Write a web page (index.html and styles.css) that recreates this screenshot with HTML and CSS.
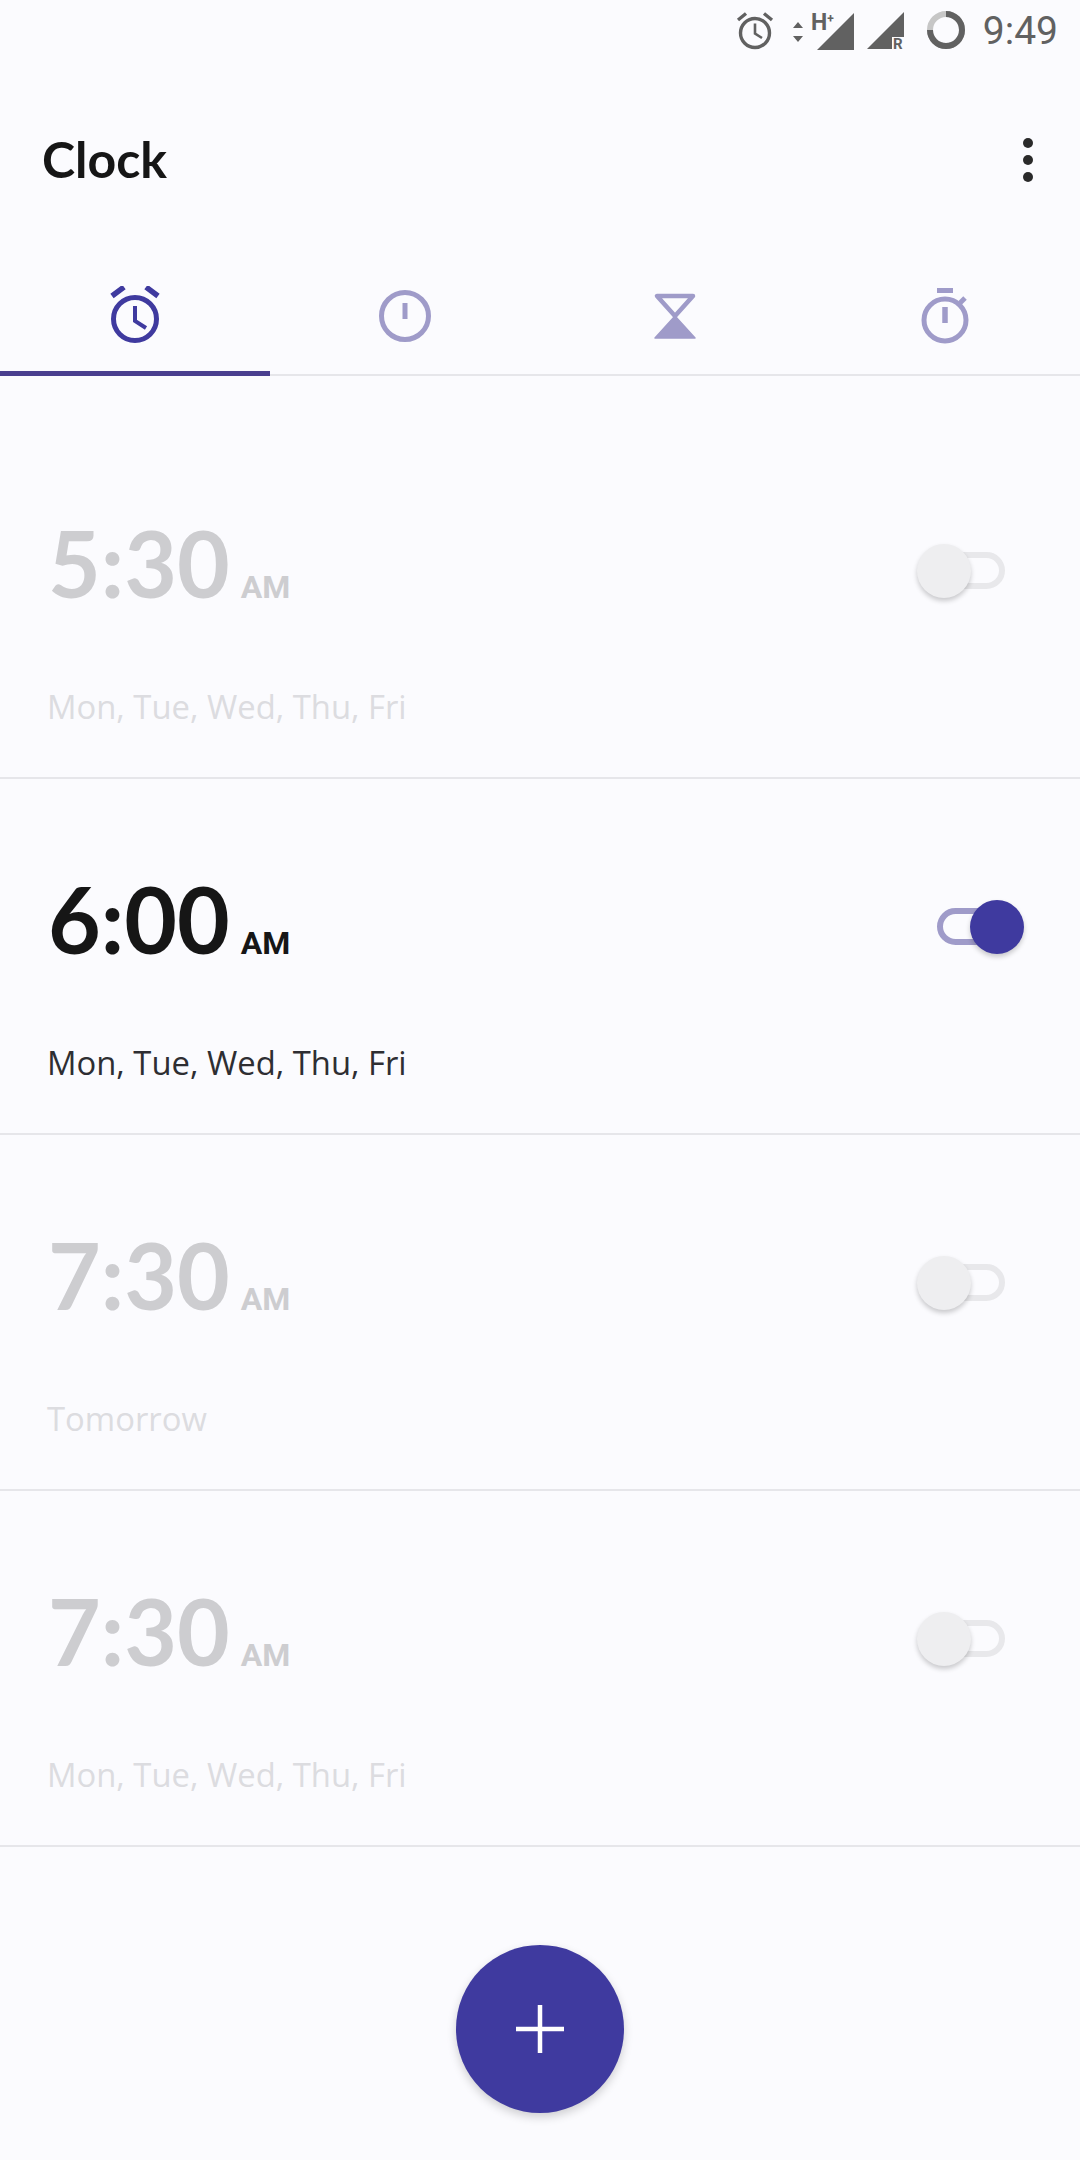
FILE: index.html
```html
<!DOCTYPE html>
<html lang="en">
<head>
    <meta charset="UTF-8">
    <meta name="viewport" content="width=device-width, initial-scale=1.0">
    <title>Clock</title>
    <link rel="stylesheet" href="styles.css">
</head>
<body>
    <div class="app">
        <div class="status-bar">
            <svg class="st-alarm" width="38" height="38" viewBox="0 0 38 38">
                <circle cx="19" cy="21" r="14.5" fill="none" stroke="#616161" stroke-width="3.4"/>
                <path d="M2 8 10 1.5M36 8 28 1.5" stroke="#616161" stroke-width="3.4" fill="none"/>
                <path d="M19 11.5V21.5L26 26" stroke="#616161" stroke-width="2.6" fill="none"/>
            </svg>
            <svg class="st-arrows" width="12" height="22" viewBox="0 0 12 22">
                <path d="M6 0 11 6H1ZM6 20 1 14H11Z" fill="#616161"/>
            </svg>
            <svg class="st-signal" width="44" height="40" viewBox="0 0 44 40">
                <path d="M43 1V38H6Z" fill="#616161"/>
                <text x="0" y="18" class="st-label">H<tspan class="st-plus" dy="-7">+</tspan></text>
            </svg>
            <svg class="st-signal-r" width="40" height="40" viewBox="0 0 40 40">
                <path d="M37 0V37H0Z" fill="#616161"/>
                <rect x="25" y="25" width="15" height="15" fill="#fbfbfe"/>
                <text x="26" y="37" class="st-label-r">R</text>
            </svg>
            <svg class="st-battery" width="40" height="40" viewBox="0 0 40 40">
                <circle cx="20" cy="20" r="16" fill="none" stroke="#c6c6c6" stroke-width="6"/>
                <path d="M20 4A16 16 0 1 1 4 20" fill="none" stroke="#616161" stroke-width="6"/>
            </svg>
            <span class="status-time">9:49</span>
        </div>

        <header class="toolbar">
            <h1>Clock</h1>
            <div class="kebab"><span></span><span></span><span></span></div>
        </header>

        <nav class="tabs">
            <div class="tab active">
                <svg width="60" height="60" viewBox="0 0 60 60">
                    <circle cx="30" cy="33" r="21.5" fill="none" stroke="currentColor" stroke-width="5"/>
                    <path d="M7 10 19 1M53 10 41 1" fill="none" stroke="currentColor" stroke-width="5.5"/>
                    <path d="M30 20V35L41 42" fill="none" stroke="currentColor" stroke-width="4"/>
                </svg>
            </div>
            <div class="tab">
                <svg width="60" height="60" viewBox="0 0 60 60">
                    <circle cx="30" cy="30" r="23.5" fill="none" stroke="currentColor" stroke-width="5"/>
                    <path d="M30 17V33" fill="none" stroke="currentColor" stroke-width="5"/>
                </svg>
            </div>
            <div class="tab">
                <svg width="60" height="60" viewBox="0 0 60 60">
                    <path d="M12 10H48L30 30Z" fill="none" stroke="currentColor" stroke-width="4.5" stroke-linejoin="round"/>
                    <path d="M30 30 50 52H10Z" fill="currentColor" stroke="currentColor" stroke-width="1.5" stroke-linejoin="round"/>
                </svg>
            </div>
            <div class="tab">
                <svg width="60" height="60" viewBox="0 0 60 60">
                    <circle cx="30" cy="34" r="21" fill="none" stroke="currentColor" stroke-width="5"/>
                    <path d="M22 4.5H38" fill="none" stroke="currentColor" stroke-width="5"/>
                    <path d="M45 17 50 12" fill="none" stroke="currentColor" stroke-width="5"/>
                    <path d="M30 21V37" fill="none" stroke="currentColor" stroke-width="5.5"/>
                </svg>
            </div>
        </nav>

        <main class="alarm-list">
            <div class="alarm off first">
                <div class="alarm-info">
                    <div class="time">5:30<span class="ampm">AM</span></div>
                    <div class="days">Mon, Tue, Wed, Thu, Fri</div>
                </div>
                <div class="toggle"><div class="thumb"></div></div>
            </div>
            <div class="alarm on">
                <div class="alarm-info">
                    <div class="time">6:00<span class="ampm">AM</span></div>
                    <div class="days">Mon, Tue, Wed, Thu, Fri</div>
                </div>
                <div class="toggle"><div class="thumb"></div></div>
            </div>
            <div class="alarm off">
                <div class="alarm-info">
                    <div class="time">7:30<span class="ampm">AM</span></div>
                    <div class="days">Tomorrow</div>
                </div>
                <div class="toggle"><div class="thumb"></div></div>
            </div>
            <div class="alarm off">
                <div class="alarm-info">
                    <div class="time">7:30<span class="ampm">AM</span></div>
                    <div class="days">Mon, Tue, Wed, Thu, Fri</div>
                </div>
                <div class="toggle"><div class="thumb"></div></div>
            </div>
        </main>

        <button class="fab">
            <svg width="48" height="48" viewBox="0 0 48 48">
                <path d="M24 0V48M0 24H48" stroke="#fff" stroke-width="4.5" fill="none"/>
            </svg>
        </button>
    </div>
</body>
</html>
```

FILE: styles.css
```css
:root {
    --bg: #fbfbfe;
    --accent: #3f3a9f;
    --accent-soft: #9f9bc9;
    --line: #e6e6ea;
}

* {
    margin: 0;
    padding: 0;
    box-sizing: border-box;
}

body {
    background-color: var(--bg);
    font-family: 'Open Sans', 'Noto Sans', sans-serif;
    overflow: hidden;
}

.app {
    position: relative;
    width: 1080px;
    height: 2160px;
}

/* Status bar */
.status-bar {
    height: 60px;
    display: flex;
    align-items: flex-start;
    padding: 12px 22px 0 0;
    justify-content: flex-end;
}

.st-label {
    font: bold 23px 'Roboto', sans-serif;
    fill: #616161;
}

.st-plus {
    font-size: 12px;
}

.st-label-r {
    font: bold 15px 'Roboto', sans-serif;
    fill: #616161;
}

.st-alarm { margin-right: 18px; }
.st-arrows { margin: 10px 7px 0 0; }
.st-signal { margin-right: 12px; }
.st-signal-r { margin-right: 19px; }
.st-battery { margin: -2px 17px 0 0; }

.status-time {
    font-family: 'Roboto', sans-serif;
    font-size: 39px;
    line-height: 38px;
    color: #616161;
}

/* Toolbar */
.toolbar {
    height: 200px;
    display: flex;
    align-items: flex-start;
    justify-content: space-between;
    padding: 71px 47px 0 42px;
}

h1 {
    font-family: 'Lato', sans-serif;
    font-size: 50px;
    line-height: 56px;
    font-weight: 700;
    color: #161616;
}

.kebab {
    display: flex;
    flex-direction: column;
    gap: 7px;
    margin-top: 7px;
}

.kebab span {
    width: 10px;
    height: 10px;
    border-radius: 50%;
    background-color: #2a2a2a;
}

/* Tabs */
.tabs {
    display: flex;
    height: 116px;
    border-bottom: 2px solid var(--line);
}

.tab {
    flex: 1;
    display: flex;
    justify-content: center;
    padding-top: 26px;
    color: var(--accent-soft);
    margin-bottom: -2px;
    border-bottom: 2px solid transparent;
}

.tab.active {
    color: var(--accent);
    border-bottom: 5px solid #4a3f8f;
}

/* Alarm rows */
.alarm {
    height: 356px;
    padding: 90px 50px 0 48px;
    display: flex;
    justify-content: space-between;
    align-items: flex-start;
    border-bottom: 2px solid var(--line);
}

.alarm.first {
    height: 403px;
    padding-top: 137px;
}

.time {
    font-family: 'Lato', sans-serif;
    font-size: 91px;
    line-height: 100px;
    font-weight: 700;
    color: #161616;
}

.ampm {
    font-family: 'Roboto', sans-serif;
    font-size: 32px;
    font-weight: 700;
    margin-left: 11px;
}

.days {
    margin-top: 47px;
    margin-left: -1px;
    font-size: 32.8px;
    line-height: 46px;
    color: #2e2e32;
}

.off .time { color: #cdcdd0; }
.off .days { color: #dcdce0; }

/* Toggle switch */
.toggle {
    position: relative;
    width: 68px;
    height: 37px;
    margin: 39px 25px 0 0;
    border: 6px solid var(--accent-soft);
    border-radius: 19px;
}

.thumb {
    position: absolute;
    top: -14.5px;
    width: 54px;
    height: 54px;
    border-radius: 50%;
    box-shadow: 0 3px 5px rgba(0, 0, 0, 0.2);
}

.on .thumb {
    right: -25px;
    background-color: var(--accent);
}

.off .toggle { border-color: #e8e8eb; }

.off .thumb {
    left: -26px;
    background-color: #eeeef0;
}

/* Add button */
.fab {
    position: absolute;
    left: 456px;
    top: 1945px;
    width: 168px;
    height: 168px;
    border: none;
    border-radius: 50%;
    background-color: var(--accent);
    display: flex;
    align-items: center;
    justify-content: center;
    box-shadow: 0 4px 10px rgba(0, 0, 0, 0.18);
}
```
